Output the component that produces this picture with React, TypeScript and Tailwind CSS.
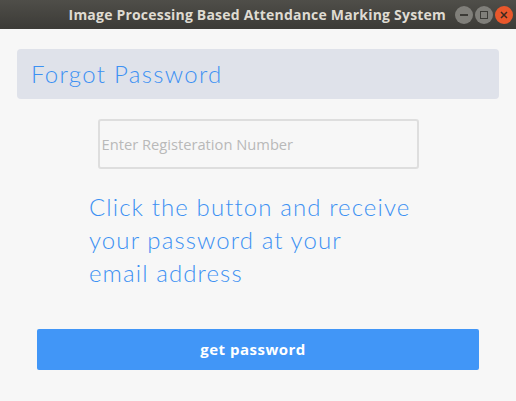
import React, { useState } from 'react';

const TitleBar = () => (
  <div className="h-[29px] flex items-center justify-end pr-[3px] bg-gradient-to-b from-[#4f4e49] to-[#3c3b37]">
    <span className="text-[14px] font-bold text-[#dfdbd2] mr-[9px] tracking-[0.2px]" style={{ fontFamily: '"Open Sans", "DejaVu Sans", sans-serif' }}>
      Image Processing Based Attendance Marking System
    </span>
    <div className="flex gap-[2px]">
      <span className="w-[18px] h-[18px] rounded-full bg-[#807f7a] flex items-center justify-center">
        <span className="w-[8px] h-[2px] bg-[#3c3b37]" />
      </span>
      <span className="w-[18px] h-[18px] rounded-full bg-[#807f7a] flex items-center justify-center">
        <span className="w-[8px] h-[8px] border-[1.5px] border-[#3c3b37]" />
      </span>
      <span className="w-[18px] h-[18px] rounded-full bg-[#e9572b] flex items-center justify-center">
        <svg width="8" height="8" viewBox="0 0 8 8">
          <path d="M1 1 L7 7 M7 1 L1 7" stroke="#3c2a20" strokeWidth="1.5" />
        </svg>
      </span>
    </div>
  </div>
);

export default function App() {
  const [reg, setReg] = useState('');
  return (
    <div className="w-[516px] h-[401px] bg-[#f7f7f7] flex flex-col overflow-hidden">
      <TitleBar />
      <div className="flex flex-col px-[17px] pt-[20px]">
        <div className="h-[50px] rounded-[4px] bg-[#dfe2ea] flex items-center pl-[14px]">
          <span className="text-[24px] font-light text-[#3d91f3] tracking-[1.3px]" style={{ fontFamily: 'Lato, "Noto Sans", sans-serif' }}>
            Forgot Password
          </span>
        </div>
        <div className="flex justify-center pt-[20px]">
          <input
            value={reg}
            onChange={(e) => setReg(e.target.value)}
            placeholder="Enter Registeration Number"
            className="w-[321px] h-[50px] border-2 border-[#dedede] rounded-[3px] bg-[#f7f7f7] px-[2px] text-[14.7px] text-[#555] placeholder:text-[#b9b9b9] outline-none"
            style={{ fontFamily: '"Open Sans", "DejaVu Sans", sans-serif' }}
          />
        </div>
        <p className="pl-[72px] pt-[21px] text-[24px] leading-[33px] font-light text-[#3d91f3] tracking-[1.1px]" style={{ fontFamily: 'Lato, "Noto Sans", sans-serif' }}>
          Click the button and receive
          <br />
          your password at your
          <br />
          email address
        </p>
        <div className="px-[20px] pt-[40px]">
          <button className="w-full h-[41px] rounded-[2px] bg-[#4196f7] text-white text-[15px] font-bold tracking-[0.5px] pr-[10px]" style={{ fontFamily: '"Open Sans", "DejaVu Sans", sans-serif' }}>
            get password
          </button>
        </div>
      </div>
    </div>
  );
}
